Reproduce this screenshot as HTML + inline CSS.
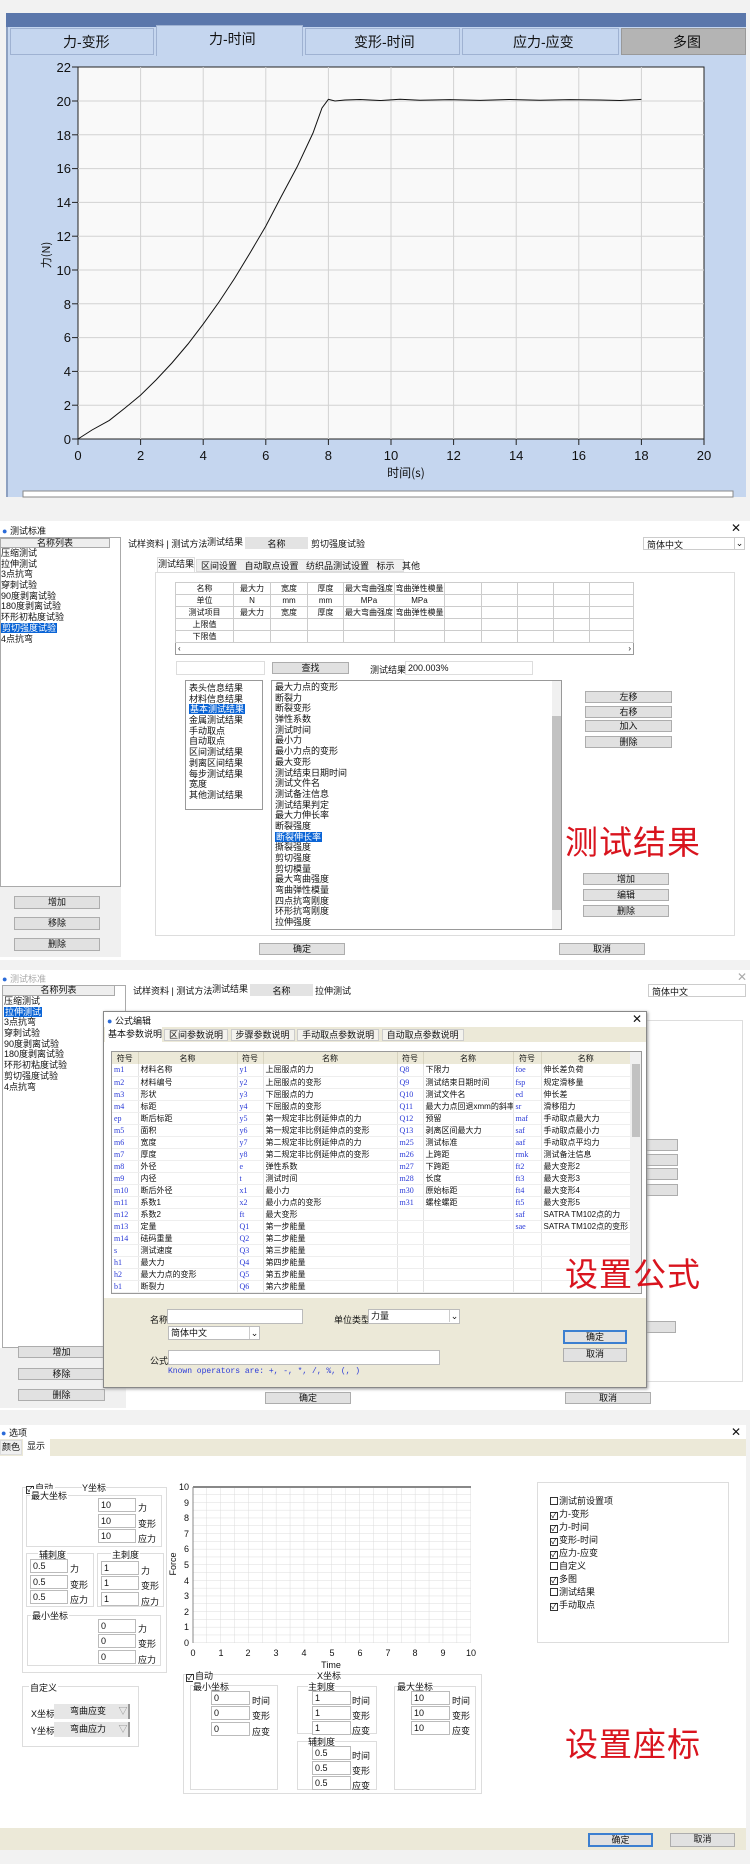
<!DOCTYPE html>
<html><head><meta charset="utf-8">
<style>
*{margin:0;padding:0;box-sizing:border-box}
body{width:750px;height:1864px;background:#f2f2f2;position:relative;overflow:hidden;font-family:"Liberation Sans","Noto Sans CJK SC",sans-serif;font-size:9px;color:#111}
.a{position:absolute;white-space:nowrap}
.b{position:absolute;border:1px solid #adadad;background:#e1e1e1;text-align:center;font-size:9px;line-height:11px}
.in{position:absolute;border:1px solid #bbb;background:#fff;font-size:9px;padding-left:2px;line-height:12px}
.g{position:absolute;border:1px solid #ddd}
.lst div{height:10.7px;line-height:10.7px;white-space:nowrap;font-size:9px}
.sel{background:#0a64d6;color:#fff;display:inline-block;padding:0 1px;line-height:10px}
.red{position:absolute;color:#d9141e;font-size:33px;font-family:"Noto Sans CJK SC",sans-serif;line-height:36px;letter-spacing:1px}
.cb{display:inline-block;width:8px;height:8px;border:1px solid #333;font-size:8px;line-height:6px;text-align:center;vertical-align:-1px;margin-right:1px;background:#fff}
table{border-collapse:collapse;table-layout:fixed}
.ft td{height:12px;line-height:11px;font-size:8px;border-right:1px solid #e4e4e4;border-bottom:1px solid #eee;padding:0 0 0 2px;white-space:nowrap;overflow:hidden}
.ft .s{color:#2a3ad8;font-family:"Liberation Serif",serif}
.ft th{height:12px;line-height:11px;background:#ece9d8;font-weight:normal;font-size:8px;border-right:1px solid #d8d4c0}
.rt td{border:1px solid #ccc;height:12px;line-height:10px;text-align:center;font-size:8px;white-space:nowrap;overflow:hidden;padding:0}
</style></head><body>

<!-- ================= SECTION 1 ================= -->
<div class="a" style="left:6px;top:13px;width:740px;height:15px;background:#5b77ab"></div>
<div class="a" style="left:6px;top:27px;width:740px;height:470px;background:#c5d6ef;border-left:2px solid #8da0c0"></div>
<div class="a" style="left:10px;top:28px;width:144px;height:27px;background:#c5d6ef;border:1px solid #9fb2d2;font-size:14px;line-height:27px;padding-left:52px">力-变形</div>
<div class="a" style="left:156px;top:25px;width:147px;height:31px;background:#c5d6ef;border:1px solid #9fb2d2;border-bottom:none;font-size:14px;line-height:26px;padding-left:52px">力-时间</div>
<div class="a" style="left:305px;top:28px;width:155px;height:27px;background:#c5d6ef;border:1px solid #9fb2d2;font-size:14px;line-height:27px;padding-left:48px">变形-时间</div>
<div class="a" style="left:462px;top:28px;width:157px;height:27px;background:#c5d6ef;border:1px solid #9fb2d2;font-size:14px;line-height:27px;padding-left:50px">应力-应变</div>
<div class="a" style="left:621px;top:28px;width:125px;height:27px;background:#b4b4b4;border:1px solid #999;font-size:14px;line-height:27px;padding-left:51px">多图</div>
<svg class="a" style="left:0;top:0" width="750" height="500">
<rect x="78" y="67" width="626" height="372" fill="#f9f9f9" stroke="#222" stroke-width="1"/>
<g stroke="#d2d2d2" stroke-width="1">
<line x1="140.6" y1="67" x2="140.6" y2="439"/><line x1="203.2" y1="67" x2="203.2" y2="439"/><line x1="265.8" y1="67" x2="265.8" y2="439"/><line x1="328.4" y1="67" x2="328.4" y2="439"/><line x1="391" y1="67" x2="391" y2="439"/><line x1="453.6" y1="67" x2="453.6" y2="439"/><line x1="516.2" y1="67" x2="516.2" y2="439"/><line x1="578.8" y1="67" x2="578.8" y2="439"/><line x1="641.4" y1="67" x2="641.4" y2="439"/>
<line x1="78" y1="405.2" x2="704" y2="405.2"/><line x1="78" y1="371.4" x2="704" y2="371.4"/><line x1="78" y1="337.6" x2="704" y2="337.6"/><line x1="78" y1="303.8" x2="704" y2="303.8"/><line x1="78" y1="270" x2="704" y2="270"/><line x1="78" y1="236.2" x2="704" y2="236.2"/><line x1="78" y1="202.4" x2="704" y2="202.4"/><line x1="78" y1="168.6" x2="704" y2="168.6"/><line x1="78" y1="134.8" x2="704" y2="134.8"/><line x1="78" y1="101" x2="704" y2="101"/>
</g>
<g stroke="#222"><line x1="72" y1="439" x2="78" y2="439"/><line x1="72" y1="405.2" x2="78" y2="405.2"/><line x1="72" y1="371.4" x2="78" y2="371.4"/><line x1="72" y1="337.6" x2="78" y2="337.6"/><line x1="72" y1="303.8" x2="78" y2="303.8"/><line x1="72" y1="270" x2="78" y2="270"/><line x1="72" y1="236.2" x2="78" y2="236.2"/><line x1="72" y1="202.4" x2="78" y2="202.4"/><line x1="72" y1="168.6" x2="78" y2="168.6"/><line x1="72" y1="134.8" x2="78" y2="134.8"/><line x1="72" y1="101" x2="78" y2="101"/><line x1="72" y1="67" x2="78" y2="67"/>
<line x1="78" y1="439" x2="78" y2="445"/><line x1="140.6" y1="439" x2="140.6" y2="445"/><line x1="203.2" y1="439" x2="203.2" y2="445"/><line x1="265.8" y1="439" x2="265.8" y2="445"/><line x1="328.4" y1="439" x2="328.4" y2="445"/><line x1="391" y1="439" x2="391" y2="445"/><line x1="453.6" y1="439" x2="453.6" y2="445"/><line x1="516.2" y1="439" x2="516.2" y2="445"/><line x1="578.8" y1="439" x2="578.8" y2="445"/><line x1="641.4" y1="439" x2="641.4" y2="445"/><line x1="704" y1="439" x2="704" y2="445"/></g>
<g font-family="Liberation Sans Narrow, Liberation Sans, sans-serif" font-size="13" fill="#111" text-anchor="end">
<text x="71" y="444">0</text><text x="71" y="410">2</text><text x="71" y="376">4</text><text x="71" y="342">6</text><text x="71" y="309">8</text><text x="71" y="275">10</text><text x="71" y="241">12</text><text x="71" y="207">14</text><text x="71" y="173">16</text><text x="71" y="140">18</text><text x="71" y="106">20</text><text x="71" y="72">22</text></g>
<g font-family="Liberation Sans Narrow, Liberation Sans, sans-serif" font-size="13" fill="#111" text-anchor="middle">
<text x="78" y="460">0</text><text x="140.6" y="460">2</text><text x="203.2" y="460">4</text><text x="265.8" y="460">6</text><text x="328.4" y="460">8</text><text x="391" y="460">10</text><text x="453.6" y="460">12</text><text x="516.2" y="460">14</text><text x="578.8" y="460">16</text><text x="641.4" y="460">18</text><text x="704" y="460">20</text>
<text x="406" y="477" font-family="Noto Sans CJK SC, sans-serif" font-size="12">时间(s)</text>
<text transform="translate(50,255) rotate(-90)" font-family="Noto Sans CJK SC, sans-serif" font-size="11">力(N)</text></g>
<path d="M78 439 L92 430 L109.3 420.4 L125 408 L140.6 395.1 L156 380 L171.9 363 L188 344 L203.2 324.1 L219 302 L234.5 278.5 L250 253 L265.8 226.1 L281 197 L297.1 166.9 L313 133 L322 108 L328.4 99.3 L335 101 L345 100 L360 99.5 L380 100.5 L400 99.3 L420 100.3 L450 99.6 L480 100.4 L510 99.5 L540 100.2 L570 99.6 L600 100 L620 100.5 L641.4 99.4" fill="none" stroke="#111" stroke-width="1"/>
<rect x="23" y="491" width="710" height="6" fill="#fff" stroke="#888"/>
</svg>

<!-- ================= SECTION 2 ================= -->
<div class="a" style="left:0;top:521px;width:750px;height:439px;background:#fff"></div>
<div class="a" style="left:2px;top:524px;font-size:9px"><span style="color:#2a6ad8">●</span> 测试标准</div>
<div class="a" style="left:731px;top:521px;font-size:12px">✕</div>
<div class="a" style="left:0;top:537px;width:121px;height:350px;border:1px solid #aaa;background:#fff"></div>
<div class="a" style="left:0;top:538px;width:110px;height:10px;background:#eee;border:1px solid #aaa;text-align:center;font-size:9px;line-height:9px">名称列表</div>
<div class="a lst" style="left:1px;top:548px">
<div>压缩测试</div><div>拉伸测试</div><div>3点抗弯</div><div>穿刺试验</div><div>90度剥离试验</div><div>180度剥离试验</div><div>环形初粘度试验</div><div><span class="sel">剪切强度试验</span></div><div>4点抗弯</div></div>
<div class="a" style="left:0;top:887px;width:121px;height:70px;background:#f0f0f0"></div>
<div class="b" style="left:14px;top:896px;width:86px;height:13px">增加</div>
<div class="b" style="left:14px;top:917px;width:86px;height:13px">移除</div>
<div class="b" style="left:14px;top:938px;width:86px;height:13px">删除</div>
<div class="a" style="left:128px;top:537px">试样资料 | 测试方法</div>
<div class="a" style="left:207px;top:535px">测试结果</div>
<div class="a" style="left:245px;top:537px;width:63px;height:12px;background:#e3e3e3;text-align:center">名称</div>
<div class="a" style="left:311px;top:537px">剪切强度试验</div>
<div class="a" style="left:643px;top:537px;width:102px;height:13px;border:1px solid #ccc;padding-left:3px">简体中文<span style="float:right;border-left:1px solid #ccc;width:10px;text-align:center">⌄</span></div>
<div class="a" style="left:157px;top:557px;width:38px;height:15px;background:#fff;border:1px solid #ddd;border-bottom:none;text-align:center;line-height:13px">测试结果</div>
<div class="a" style="left:196px;top:559px;width:208px;height:13px;background:#f0f0f0;border:1px solid #ddd;line-height:12px;padding-left:4px">区间设置 &nbsp; 自动取点设置 &nbsp; 纺织品测试设置 &nbsp; 标示 &nbsp; 其他</div>
<div class="a" style="left:155px;top:572px;width:580px;height:364px;border:1px solid #ddd"></div>
<table class="a rt" style="left:175px;top:582px;width:459px;border:1px solid #999">
<colgroup><col style="width:58px"><col style="width:37px"><col style="width:37px"><col style="width:36px"><col style="width:51px"><col style="width:50px"><col style="width:37px"><col style="width:36px"><col style="width:36px"><col style="width:36px"><col></colgroup>
<tr><td>名称</td><td>最大力</td><td>宽度</td><td>厚度</td><td>最大弯曲强度</td><td>弯曲弹性模量</td><td></td><td></td><td></td><td></td><td></td></tr>
<tr><td>单位</td><td>N</td><td>mm</td><td>mm</td><td>MPa</td><td>MPa</td><td></td><td></td><td></td><td></td><td></td></tr>
<tr><td>测试项目</td><td>最大力</td><td>宽度</td><td>厚度</td><td>最大弯曲强度</td><td>弯曲弹性模量</td><td></td><td></td><td></td><td></td><td></td></tr>
<tr><td>上限值</td><td></td><td></td><td></td><td></td><td></td><td></td><td></td><td></td><td></td><td></td></tr>
<tr><td>下限值</td><td></td><td></td><td></td><td></td><td></td><td></td><td></td><td></td><td></td><td></td></tr>
<tr><td colspan="11" style="text-align:left;border:none;padding:0 2px">‹<span style="float:right">›</span></td></tr>
</table>
<div class="in" style="left:176px;top:661px;width:89px;height:14px;border-color:#ddd"></div>
<div class="b" style="left:272px;top:662px;width:77px;height:12px">查找</div>
<div class="a" style="left:370px;top:663px">测试结果</div>
<div class="in" style="left:405px;top:661px;width:128px;height:14px;border-color:#ddd">200.003%</div>
<div class="a lst" style="left:185px;top:680px;width:78px;height:130px;border:1px solid #999;padding:2px 0 0 3px">
<div>表头信息结果</div><div>材料信息结果</div><div><span class="sel">基本测试结果</span></div><div>金属测试结果</div><div>手动取点</div><div>自动取点</div><div>区间测试结果</div><div>剥离区间结果</div><div>每步测试结果</div><div>宽度</div><div>其他测试结果</div></div>
<div class="a lst" style="left:271px;top:680px;width:291px;height:250px;border:1px solid #999;padding:1px 0 0 3px">
<div>最大力点的变形</div><div>断裂力</div><div>断裂变形</div><div>弹性系数</div><div>测试时间</div><div>最小力</div><div>最小力点的变形</div><div>最大变形</div><div>测试结束日期时间</div><div>测试文件名</div><div>测试备注信息</div><div>测试结果判定</div><div>最大力伸长率</div><div>断裂强度</div><div><span class="sel">断裂伸长率</span></div><div>撕裂强度</div><div>剪切强度</div><div>剪切模量</div><div>最大弯曲强度</div><div>弯曲弹性模量</div><div>四点抗弯刚度</div><div>环形抗弯刚度</div><div>拉伸强度</div></div>
<div class="a" style="left:552px;top:681px;width:9px;height:248px;background:#f0f0f0"></div>
<div class="a" style="left:552px;top:716px;width:9px;height:194px;background:#c2c2c2"></div>
<div class="b" style="left:585px;top:691px;width:87px;height:12px">左移</div>
<div class="b" style="left:585px;top:706px;width:87px;height:12px">右移</div>
<div class="b" style="left:585px;top:720px;width:87px;height:12px">加入</div>
<div class="b" style="left:585px;top:736px;width:87px;height:12px">删除</div>
<div class="red" style="left:565px;top:822px">测试结果</div>
<div class="b" style="left:583px;top:873px;width:86px;height:12px">增加</div>
<div class="b" style="left:583px;top:889px;width:86px;height:12px">编辑</div>
<div class="b" style="left:583px;top:905px;width:86px;height:12px">删除</div>
<div class="b" style="left:259px;top:943px;width:86px;height:12px">确定</div>
<div class="b" style="left:559px;top:943px;width:86px;height:12px">取消</div>

<!-- ================= SECTION 3 ================= -->
<div class="a" style="left:0;top:970px;width:750px;height:440px;background:#fff"></div>
<div class="a" style="left:2px;top:972px;color:#aaa"><span style="color:#2a6ad8">●</span> 测试标准</div>
<div class="a" style="left:737px;top:970px;font-size:12px;color:#aaa">✕</div>
<div class="a" style="left:2px;top:985px;width:124px;height:363px;border:1px solid #aaa;background:#fff"></div>
<div class="a" style="left:2px;top:985px;width:113px;height:11px;background:#eee;border:1px solid #aaa;text-align:center;line-height:9px">名称列表</div>
<div class="a lst" style="left:4px;top:996px">
<div>压缩测试</div><div><span class="sel">拉伸测试</span></div><div>3点抗弯</div><div>穿刺试验</div><div>90度剥离试验</div><div>180度剥离试验</div><div>环形初粘度试验</div><div>剪切强度试验</div><div>4点抗弯</div></div>
<div class="a" style="left:0;top:1348px;width:126px;height:60px;background:#f0f0f0"></div>
<div class="b" style="left:18px;top:1346px;width:87px;height:12px">增加</div>
<div class="b" style="left:18px;top:1368px;width:87px;height:12px">移除</div>
<div class="b" style="left:18px;top:1389px;width:87px;height:12px">删除</div>
<div class="a" style="left:133px;top:984px">试样资料 | 测试方法</div>
<div class="a" style="left:212px;top:982px">测试结果</div>
<div class="a" style="left:250px;top:984px;width:63px;height:12px;background:#e3e3e3;text-align:center">名称</div>
<div class="a" style="left:315px;top:984px">拉伸测试</div>
<div class="a" style="left:648px;top:984px;width:98px;height:13px;border:1px solid #ccc;padding-left:3px">简体中文</div>
<div class="a" style="left:640px;top:1020px;width:103px;height:362px;border:1px solid #ddd"></div>
<div class="b" style="left:646px;top:1139px;width:32px;height:12px"></div>
<div class="b" style="left:646px;top:1154px;width:32px;height:12px"></div>
<div class="b" style="left:646px;top:1168px;width:32px;height:12px"></div>
<div class="b" style="left:646px;top:1184px;width:32px;height:12px"></div>
<div class="b" style="left:646px;top:1321px;width:30px;height:12px"></div>
<div class="b" style="left:265px;top:1392px;width:86px;height:12px">确定</div>
<div class="b" style="left:565px;top:1392px;width:86px;height:12px">取消</div>
<!-- dialog -->
<div class="a" style="left:103px;top:1011px;width:544px;height:377px;background:#fff;border:1px solid #888;box-shadow:1px 1px 3px #999"></div>
<div class="a" style="left:107px;top:1014px"><span style="color:#2a6ad8">●</span> 公式编辑</div>
<div class="a" style="left:632px;top:1012px;font-size:12px">✕</div>
<div class="a" style="left:104px;top:1027px;width:542px;height:15px;background:#ece9d8"></div>
<div class="a" style="left:105px;top:1027px;width:57px;height:16px;background:#fff;padding-left:3px;line-height:14px">基本参数说明</div>
<div class="a" style="left:164px;top:1028px;line-height:14px">
<span style="border:1px solid #ccc;background:#f4f3ee;padding:0 4px">区间参数说明</span> <span style="border:1px solid #ccc;background:#f4f3ee;padding:0 4px">步骤参数说明</span> <span style="border:1px solid #ccc;background:#f4f3ee;padding:0 4px">手动取点参数说明</span> <span style="border:1px solid #ccc;background:#f4f3ee;padding:0 4px">自动取点参数说明</span></div>
<div class="a" style="left:111px;top:1051px;width:531px;height:243px;border:1px solid #999;overflow:hidden">
<table class="ft" style="width:519px">
<colgroup><col style="width:26px"><col style="width:99px"><col style="width:26px"><col style="width:134px"><col style="width:26px"><col style="width:90px"><col style="width:28px"><col></colgroup>
<tr><th>符号</th><th>名称</th><th>符号</th><th>名称</th><th>符号</th><th>名称</th><th>符号</th><th>名称</th></tr>
<tr><td class="s">m1</td><td>材料名称</td><td class="s">y1</td><td>上屈服点的力</td><td class="s">Q8</td><td>下限力</td><td class="s">foe</td><td>伸长差负荷</td></tr>
<tr><td class="s">m2</td><td>材料编号</td><td class="s">y2</td><td>上屈服点的变形</td><td class="s">Q9</td><td>测试结束日期时间</td><td class="s">fsp</td><td>规定滑移量</td></tr>
<tr><td class="s">m3</td><td>形状</td><td class="s">y3</td><td>下屈服点的力</td><td class="s">Q10</td><td>测试文件名</td><td class="s">ed</td><td>伸长差</td></tr>
<tr><td class="s">m4</td><td>标距</td><td class="s">y4</td><td>下屈服点的变形</td><td class="s">Q11</td><td>最大力点回退xmm的斜率</td><td class="s">sr</td><td>滑移阻力</td></tr>
<tr><td class="s">ep</td><td>断后标距</td><td class="s">y5</td><td>第一规定非比例延伸点的力</td><td class="s">Q12</td><td>预留</td><td class="s">maf</td><td>手动取点最大力</td></tr>
<tr><td class="s">m5</td><td>面积</td><td class="s">y6</td><td>第一规定非比例延伸点的变形</td><td class="s">Q13</td><td>剥离区间最大力</td><td class="s">saf</td><td>手动取点最小力</td></tr>
<tr><td class="s">m6</td><td>宽度</td><td class="s">y7</td><td>第二规定非比例延伸点的力</td><td class="s">m25</td><td>测试标准</td><td class="s">aaf</td><td>手动取点平均力</td></tr>
<tr><td class="s">m7</td><td>厚度</td><td class="s">y8</td><td>第二规定非比例延伸点的变形</td><td class="s">m26</td><td>上跨距</td><td class="s">rmk</td><td>测试备注信息</td></tr>
<tr><td class="s">m8</td><td>外径</td><td class="s">e</td><td>弹性系数</td><td class="s">m27</td><td>下跨距</td><td class="s">ft2</td><td>最大变形2</td></tr>
<tr><td class="s">m9</td><td>内径</td><td class="s">t</td><td>测试时间</td><td class="s">m28</td><td>长度</td><td class="s">ft3</td><td>最大变形3</td></tr>
<tr><td class="s">m10</td><td>断后外径</td><td class="s">x1</td><td>最小力</td><td class="s">m30</td><td>原始标距</td><td class="s">ft4</td><td>最大变形4</td></tr>
<tr><td class="s">m11</td><td>系数1</td><td class="s">x2</td><td>最小力点的变形</td><td class="s">m31</td><td>螺栓螺距</td><td class="s">ft5</td><td>最大变形5</td></tr>
<tr><td class="s">m12</td><td>系数2</td><td class="s">ft</td><td>最大变形</td><td></td><td></td><td class="s">saf</td><td>SATRA TM102点的力</td></tr>
<tr><td class="s">m13</td><td>定量</td><td class="s">Q1</td><td>第一步能量</td><td></td><td></td><td class="s">sae</td><td>SATRA TM102点的变形</td></tr>
<tr><td class="s">m14</td><td>砝码重量</td><td class="s">Q2</td><td>第二步能量</td><td></td><td></td><td></td><td></td></tr>
<tr><td class="s">s</td><td>测试速度</td><td class="s">Q3</td><td>第三步能量</td><td></td><td></td><td></td><td></td></tr>
<tr><td class="s">h1</td><td>最大力</td><td class="s">Q4</td><td>第四步能量</td><td></td><td></td><td></td><td></td></tr>
<tr><td class="s">h2</td><td>最大力点的变形</td><td class="s">Q5</td><td>第五步能量</td><td></td><td></td><td></td><td></td></tr>
<tr><td class="s">b1</td><td>断裂力</td><td class="s">Q6</td><td>第六步能量</td><td></td><td></td><td></td><td></td></tr>
</table>
<div class="a" style="right:0;top:0;width:11px;height:243px;background:#f0f0f0"></div>
<div class="a" style="right:1px;top:12px;width:8px;height:73px;background:#c2c2c2"></div>
</div>
<div class="red" style="left:565px;top:1254px">设置公式</div>
<div class="a" style="left:104px;top:1298px;width:542px;height:89px;background:#ece9d8"></div>
<div class="a" style="left:150px;top:1313px">名称</div>
<div class="in" style="left:167px;top:1309px;width:136px;height:15px"></div>
<div class="in" style="left:168px;top:1326px;width:92px;height:14px">简体中文<span style="float:right;border-left:1px solid #ccc;width:10px;text-align:center">⌄</span></div>
<div class="a" style="left:334px;top:1313px">单位类型</div>
<div class="in" style="left:368px;top:1309px;width:92px;height:15px">力量<span style="float:right;border-left:1px solid #ccc;width:10px;text-align:center">⌄</span></div>
<div class="a" style="left:150px;top:1354px">公式</div>
<div class="in" style="left:168px;top:1350px;width:272px;height:15px"></div>
<div class="a" style="left:168px;top:1367px;color:#2a3ad8;font-family:'Liberation Mono',monospace;font-size:8px">Known operators are: +, -, *, /, %, (, )</div>
<div class="b" style="left:563px;top:1330px;width:64px;height:14px;border:2px solid #3c7fd0">确定</div>
<div class="b" style="left:563px;top:1348px;width:64px;height:14px">取消</div>

<!-- ================= SECTION 4 ================= -->
<div class="a" style="left:0;top:1425px;width:746px;height:425px;background:#fff"></div>
<div class="a" style="left:1px;top:1426px"><span style="color:#2a6ad8">●</span> 选项</div>
<div class="a" style="left:731px;top:1425px;font-size:12px">✕</div>
<div class="a" style="left:0;top:1439px;width:746px;height:17px;background:#ece9d8"></div>
<div class="a" style="left:0;top:1440px;width:22px;height:15px;background:#f0f0f0;border:1px solid #ddd;line-height:13px;padding-left:1px">颜色</div>
<div class="a" style="left:23px;top:1439px;width:27px;height:17px;background:#fff;line-height:14px;padding-left:4px">显示</div>
<!-- Y axis settings -->
<div class="g" style="left:22px;top:1487px;width:145px;height:186px"></div>
<div class="a" style="left:26px;top:1481px;background:#fff;padding-right:2px"><span class="cb">✓</span>自动</div>
<div class="a" style="left:82px;top:1481px;background:#fff">Y坐标</div>
<div class="g" style="left:26px;top:1495px;width:136px;height:52px"></div>
<div class="a" style="left:30px;top:1489px;background:#fff;padding:0 1px">最大坐标</div>
<div class="in" style="left:98px;top:1498px;width:38px;height:14px">10</div><div class="a" style="left:138px;top:1501px">力</div>
<div class="in" style="left:98px;top:1514px;width:38px;height:14px">10</div><div class="a" style="left:138px;top:1517px">变形</div>
<div class="in" style="left:98px;top:1529px;width:38px;height:14px">10</div><div class="a" style="left:138px;top:1532px">应力</div>
<div class="g" style="left:26px;top:1553px;width:68px;height:54px"></div>
<div class="a" style="left:38px;top:1548px;background:#fff;padding:0 1px">辅刺度</div>
<div class="in" style="left:30px;top:1559px;width:38px;height:14px">0.5</div><div class="a" style="left:70px;top:1562px">力</div>
<div class="in" style="left:30px;top:1575px;width:38px;height:14px">0.5</div><div class="a" style="left:70px;top:1578px">变形</div>
<div class="in" style="left:30px;top:1590px;width:38px;height:14px">0.5</div><div class="a" style="left:70px;top:1593px">应力</div>
<div class="g" style="left:97px;top:1553px;width:67px;height:54px"></div>
<div class="a" style="left:111px;top:1548px;background:#fff;padding:0 1px">主刺度</div>
<div class="in" style="left:101px;top:1561px;width:38px;height:14px">1</div><div class="a" style="left:141px;top:1564px">力</div>
<div class="in" style="left:101px;top:1576px;width:38px;height:14px">1</div><div class="a" style="left:141px;top:1579px">变形</div>
<div class="in" style="left:101px;top:1592px;width:38px;height:14px">1</div><div class="a" style="left:141px;top:1595px">应力</div>
<div class="g" style="left:27px;top:1615px;width:134px;height:51px"></div>
<div class="a" style="left:31px;top:1609px;background:#fff;padding:0 1px">最小坐标</div>
<div class="in" style="left:98px;top:1619px;width:38px;height:14px">0</div><div class="a" style="left:138px;top:1622px">力</div>
<div class="in" style="left:98px;top:1634px;width:38px;height:14px">0</div><div class="a" style="left:138px;top:1637px">变形</div>
<div class="in" style="left:98px;top:1650px;width:38px;height:14px">0</div><div class="a" style="left:138px;top:1653px">应力</div>
<div class="g" style="left:22px;top:1686px;width:117px;height:61px"></div>
<div class="a" style="left:29px;top:1681px;background:#fff;padding:0 1px">自定义</div>
<div class="a" style="left:31px;top:1707px">X坐标</div>
<div class="a" style="left:54px;top:1704px;width:76px;height:15px;background:#e6e6e6;border-right:2px solid #999;line-height:14px;padding-left:16px">弯曲应变 <span style="color:#888;margin-left:10px">▽</span></div>
<div class="a" style="left:31px;top:1724px">Y坐标</div>
<div class="a" style="left:54px;top:1722px;width:76px;height:15px;background:#e6e6e6;border-right:2px solid #999;line-height:14px;padding-left:16px">弯曲应力 <span style="color:#888;margin-left:10px">▽</span></div>
<!-- small chart -->
<svg class="a" style="left:0;top:1470px" width="500" height="210">
<defs><pattern id="pg" x="193" y="17" width="13.9" height="7.8" patternUnits="userSpaceOnUse"><path d="M13.9 0V7.8M0 7.8H13.9" stroke="#dcdcdc" stroke-width="1" fill="none"/></pattern></defs>
<rect x="193" y="17" width="278" height="156" fill="url(#pg)"/>
<line x1="193" y1="17" x2="471" y2="17" stroke="#888" stroke-width="2"/>
<line x1="193" y1="17" x2="193" y2="173" stroke="#888"/>
<g font-family="Liberation Sans, sans-serif" font-size="9" fill="#111" text-anchor="end">
<text x="189" y="176">0</text><text x="189" y="160">1</text><text x="189" y="145">2</text><text x="189" y="129">3</text><text x="189" y="114">4</text><text x="189" y="98">5</text><text x="189" y="82">6</text><text x="189" y="67">7</text><text x="189" y="51">8</text><text x="189" y="36">9</text><text x="189" y="20">10</text></g>
<g font-family="Liberation Sans, sans-serif" font-size="9" fill="#111" text-anchor="middle">
<text x="193" y="186">0</text><text x="221" y="186">1</text><text x="248" y="186">2</text><text x="276" y="186">3</text><text x="304" y="186">4</text><text x="332" y="186">5</text><text x="360" y="186">6</text><text x="388" y="186">7</text><text x="415" y="186">8</text><text x="443" y="186">9</text><text x="471" y="186">10</text>
<text x="331" y="198">Time</text>
<text transform="translate(176,94) rotate(-90)">Force</text></g>
</svg>
<!-- X axis settings -->
<div class="g" style="left:183px;top:1674px;width:299px;height:120px"></div>
<div class="a" style="left:186px;top:1669px;background:#fff"><span class="cb">✓</span>自动</div>
<div class="a" style="left:317px;top:1669px;background:#fff">X坐标</div>
<div class="g" style="left:190px;top:1685px;width:88px;height:105px"></div>
<div class="a" style="left:193px;top:1680px;background:#fff">最小坐标</div>
<div class="in" style="left:211px;top:1691px;width:39px;height:14px">0</div><div class="a" style="left:252px;top:1694px">时间</div>
<div class="in" style="left:211px;top:1706px;width:39px;height:14px">0</div><div class="a" style="left:252px;top:1709px">变形</div>
<div class="in" style="left:211px;top:1722px;width:39px;height:14px">0</div><div class="a" style="left:252px;top:1725px">应变</div>
<div class="g" style="left:297px;top:1686px;width:80px;height:48px"></div>
<div class="a" style="left:308px;top:1680px;background:#fff">主刺度</div>
<div class="in" style="left:312px;top:1691px;width:39px;height:14px">1</div><div class="a" style="left:352px;top:1694px">时间</div>
<div class="in" style="left:312px;top:1706px;width:39px;height:14px">1</div><div class="a" style="left:352px;top:1709px">变形</div>
<div class="in" style="left:312px;top:1721px;width:39px;height:14px">1</div><div class="a" style="left:352px;top:1724px">应变</div>
<div class="g" style="left:297px;top:1741px;width:80px;height:49px"></div>
<div class="a" style="left:308px;top:1735px;background:#fff">辅刺度</div>
<div class="in" style="left:312px;top:1746px;width:39px;height:14px">0.5</div><div class="a" style="left:352px;top:1749px">时间</div>
<div class="in" style="left:312px;top:1761px;width:39px;height:14px">0.5</div><div class="a" style="left:352px;top:1764px">变形</div>
<div class="in" style="left:312px;top:1776px;width:39px;height:14px">0.5</div><div class="a" style="left:352px;top:1779px">应变</div>
<div class="g" style="left:394px;top:1686px;width:82px;height:104px"></div>
<div class="a" style="left:397px;top:1680px;background:#fff">最大坐标</div>
<div class="in" style="left:411px;top:1691px;width:39px;height:14px">10</div><div class="a" style="left:452px;top:1694px">时间</div>
<div class="in" style="left:411px;top:1706px;width:39px;height:14px">10</div><div class="a" style="left:452px;top:1709px">变形</div>
<div class="in" style="left:411px;top:1721px;width:39px;height:14px">10</div><div class="a" style="left:452px;top:1724px">应变</div>
<!-- right checklist -->
<div class="g" style="left:537px;top:1482px;width:192px;height:161px"></div>
<div class="a" style="left:550px;top:1495px;line-height:13px">
<div><span class="cb"></span>测试前设置项</div><div><span class="cb">✓</span>力-变形</div><div><span class="cb">✓</span>力-时间</div><div><span class="cb">✓</span>变形-时间</div><div><span class="cb">✓</span>应力-应变</div><div><span class="cb"></span>自定义</div><div><span class="cb">✓</span>多图</div><div><span class="cb"></span>测试结果</div><div><span class="cb">✓</span>手动取点</div></div>
<div class="red" style="left:565px;top:1724px">设置座标</div>
<div class="a" style="left:0;top:1828px;width:746px;height:22px;background:#ece9d8"></div>
<div class="b" style="left:588px;top:1833px;width:65px;height:14px;border:2px solid #3c7fd0">确定</div>
<div class="b" style="left:670px;top:1833px;width:65px;height:14px">取消</div>
</body></html>
